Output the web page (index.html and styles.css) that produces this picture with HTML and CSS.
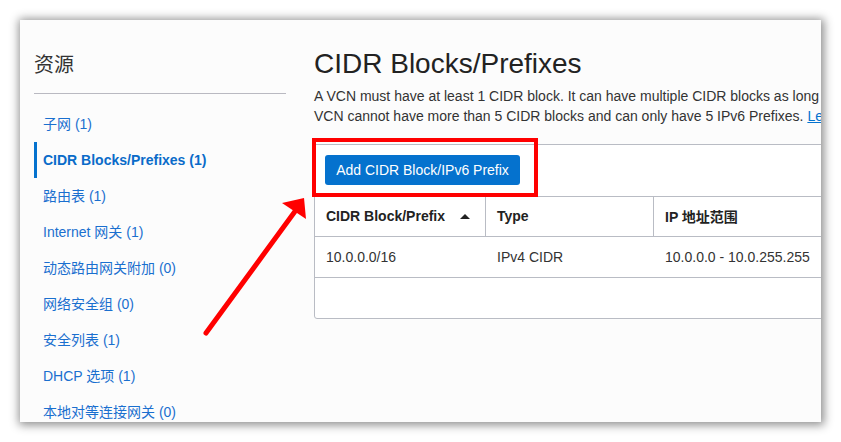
FILE: index.html
```html
<!DOCTYPE html>
<html lang="zh-CN">
<head>
<meta charset="utf-8">
<title>CIDR Blocks/Prefixes</title>
<link rel="stylesheet" href="styles.css">
</head>
<body>
<div class="frame">
  <aside class="sidebar">
    <div class="side-head"><h2 class="side-title">资源</h2></div>
    <ul class="side-nav">
      <li class="side-item"><a href="#">子网 (1)</a></li>
      <li class="side-item active"><a href="#">CIDR Blocks/Prefixes (1)</a></li>
      <li class="side-item"><a href="#">路由表 (1)</a></li>
      <li class="side-item"><a href="#">Internet 网关 (1)</a></li>
      <li class="side-item"><a href="#">动态路由网关附加 (0)</a></li>
      <li class="side-item"><a href="#">网络安全组 (0)</a></li>
      <li class="side-item"><a href="#">安全列表 (1)</a></li>
      <li class="side-item"><a href="#">DHCP 选项 (1)</a></li>
      <li class="side-item"><a href="#">本地对等连接网关 (0)</a></li>
    </ul>
  </aside>
  <main class="main">
    <h1 class="title">CIDR Blocks/Prefixes</h1>
    <p class="desc">A VCN must have at least 1 CIDR block. It can have multiple CIDR blocks as long as they don't overlap. A<br>VCN cannot have more than 5 CIDR blocks and can only have 5 IPv6 Prefixes. <a href="#" class="link">Learn more</a></p>
    <section class="panel">
      <div class="toolbar">
        <span class="btn-wrap"><button class="btn">Add CIDR Block/IPv6 Prefix</button></span>
      </div>
      <div class="grid">
        <div class="th th-sort"><span>CIDR Block/Prefix</span><span class="sort-up"></span></div>
        <div class="th">Type</div>
        <div class="th th-last">IP 地址范围</div>
        <div class="td">10.0.0.0/16</div>
        <div class="td">IPv4 CIDR</div>
        <div class="td">10.0.0.0 - 10.0.255.255</div>
        <div class="td td-empty"></div>
        <div class="td td-empty"></div>
        <div class="td td-empty"></div>
      </div>
    </section>
  </main>
</div>
<svg class="arrow" width="841" height="442" viewBox="0 0 841 442">
  <line x1="206" y1="333" x2="296" y2="210" stroke="#ff0000" stroke-width="5" stroke-linecap="round"/>
  <polygon points="304,198 282,203 306,219" fill="#ff0000"/>
</svg>
</body>
</html>
```

FILE: styles.css
```css
html, body {
  margin: 0;
  padding: 0;
  background: #ffffff;
}

body {
  position: relative;
  width: 841px;
  height: 442px;
  overflow: hidden;
  font-family: "Liberation Sans", Arial, "Noto Sans CJK SC", sans-serif;
  font-size: 14px;
  color: #333333;
}

.frame {
  margin: 20px;
  width: 801px;
  height: 402px;
  background: #fcfcfc;
  box-shadow: 1px 1px 9px 2px rgba(0, 0, 0, 0.45);
  overflow: hidden;
  display: flex;
  box-sizing: border-box;
}

.sidebar {
  flex: 0 0 252px;
  margin-left: 14px;
  padding-top: 35px;
}

.side-head {
  padding-bottom: 18px;
  border-bottom: 1px solid #b9b9c1;
}

.side-title {
  margin: 0;
  font-size: 20px;
  line-height: 20px;
  font-weight: normal;
  color: #333333;
}

.side-nav {
  list-style: none;
  margin: 12px 0 0;
  padding: 0;
}

.side-item {
  height: 36px;
  line-height: 36px;
  padding-left: 9px;
  white-space: nowrap;
}

.side-item a {
  color: #1a6fcf;
  text-decoration: none;
}

.side-item.active {
  border-left: 3px solid #0572ce;
  padding-left: 6px;
}

.side-item.active a {
  color: #0a6bc9;
  font-weight: bold;
}

.main {
  flex: 0 0 auto;
  margin-left: 28px;
  padding-top: 28px;
  width: 720px;
}

.title {
  margin: 0;
  font-size: 28px;
  line-height: 32px;
  font-weight: normal;
  color: #222222;
}

.desc {
  margin: 6px 0 0;
  line-height: 20px;
  white-space: nowrap;
  color: #333333;
}

.link {
  color: #0572ce;
  text-decoration: underline;
}

.panel {
  margin-top: 18px;
  width: 700px;
  background: #ffffff;
  border: 1px solid #b9bcc4;
  border-radius: 0 0 0 3px;
}

.toolbar {
  padding: 10px 10px 11px;
  border-bottom: 1px solid #b9bcc4;
  display: flex;
}

.btn-wrap {
  position: relative;
  display: inline-flex;
}

.btn-wrap::after {
  content: "";
  position: absolute;
  left: -13px;
  top: -17px;
  right: -18px;
  bottom: -12px;
  border: 4px solid #ff0000;
  pointer-events: none;
}

.btn {
  width: 195px;
  height: 30px;
  padding: 0;
  border: none;
  border-radius: 3px;
  background: #0572ce;
  color: #ffffff;
  font-family: "Liberation Sans", Arial, sans-serif;
  font-size: 14px;
  line-height: 30px;
  cursor: pointer;
}

.grid {
  display: grid;
  grid-template-columns: 171px 168px 1fr;
}

.th {
  height: 38px;
  padding-bottom: 1px;
  box-sizing: content-box;
  padding-left: 11px;
  display: flex;
  align-items: center;
  font-weight: bold;
  color: #222222;
  border-right: 1px solid #b9bcc4;
  border-bottom: 1px solid #b9bcc4;
  white-space: nowrap;
}

.th-last {
  border-right: none;
}

.th-sort {
  justify-content: space-between;
  padding-right: 15px;
}

.sort-up {
  width: 0;
  height: 0;
  border-left: 5px solid transparent;
  border-right: 5px solid transparent;
  border-bottom: 5px solid #222222;
  margin-top: 1px;
}

.td {
  height: 39px;
  padding-bottom: 1px;
  padding-left: 11px;
  display: flex;
  align-items: center;
  border-bottom: 1px solid #b9bcc4;
  color: #333333;
  white-space: nowrap;
}

.td-empty {
  border-bottom: none;
}

.arrow {
  position: absolute;
  left: 0;
  top: 0;
  pointer-events: none;
}
```
